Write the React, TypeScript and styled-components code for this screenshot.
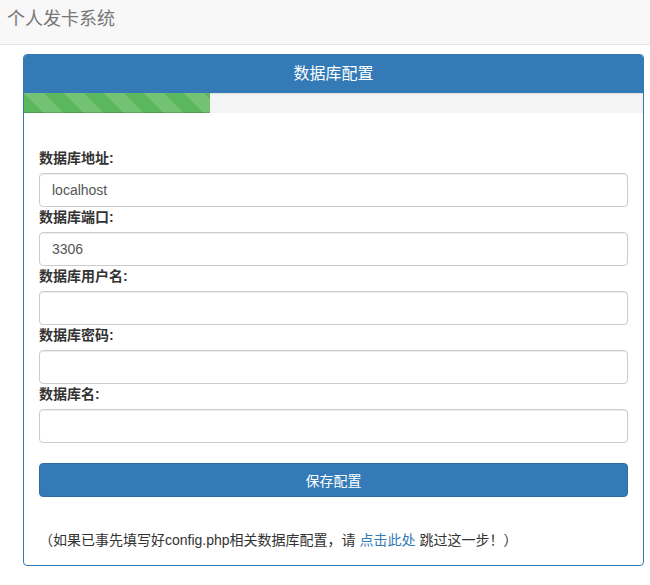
import React from "react";
import styled, { createGlobalStyle } from "styled-components";

const Global = createGlobalStyle`
  html, body { margin: 0; padding: 0; background: #fff; }
  body {
    font-family: "Liberation Sans", "Noto Sans CJK SC", Arial, sans-serif;
    font-size: 14px;
    line-height: 1.42857;
    color: #333;
  }
  * { box-sizing: border-box; }
`;

const Navbar = styled.div`
  height: 45px;
  background: #f8f8f8;
  border-bottom: 1px solid #e7e7e7;
  display: flex;
  align-items: center;
  padding: 0 0 6px 7px;
`;

const Brand = styled.span`
  font-size: 18px;
  color: #777;
  line-height: 20px;
`;

const Panel = styled.div`
  margin: 9px 6px 0 23px;
  border: 1px solid #337ab7;
  border-radius: 4px;
  background: #fff;
  overflow: hidden;
`;

const Heading = styled.div`
  background: #337ab7;
  color: #fff;
  font-size: 16px;
  height: 38px;
  display: flex;
  align-items: center;
  justify-content: center;
`;

const Progress = styled.div`
  height: 20px;
  background: #f5f5f5;
  box-shadow: inset 0 1px 2px rgba(0, 0, 0, 0.1);
`;

const Bar = styled.div`
  height: 100%;
  background-color: #5cb85c;
  background-image: linear-gradient(
    45deg,
    rgba(255, 255, 255, 0.15) 25%,
    transparent 25%,
    transparent 50%,
    rgba(255, 255, 255, 0.15) 50%,
    rgba(255, 255, 255, 0.15) 75%,
    transparent 75%,
    transparent
  );
  background-size: 40px 40px;
  box-shadow: inset 0 -1px 0 rgba(0, 0, 0, 0.15);
`;

const Body = styled.div`
  padding: 35px 15px 15px 15px;
  display: flex;
  flex-direction: column;
`;

const Label = styled.label`
  display: block;
  font-weight: bold;
  line-height: 20px;
  margin-bottom: 5px;
`;

const Input = styled.input`
  display: block;
  width: 100%;
  height: 34px;
  padding: 6px 12px;
  font-family: inherit;
  font-size: 14px;
  color: #555;
  background: #fff;
  border: 1px solid #ccc;
  border-radius: 4px;
  box-shadow: inset 0 1px 1px rgba(0, 0, 0, 0.075);
  outline: none;
`;

const Button = styled.button`
  margin-top: 20px;
  width: 100%;
  height: 34px;
  font-family: inherit;
  font-size: 14px;
  color: #fff;
  background: #337ab7;
  border: 1px solid #2e6da4;
  border-radius: 4px;
  cursor: pointer;
`;

const Note = styled.p`
  margin: 33px 0 0 0;
  line-height: 20px;
  color: #333;
`;

const Link = styled.a`
  color: #337ab7;
  text-decoration: none;
`;

const fields: { label: string; value: string }[] = [
  { label: "数据库地址:", value: "localhost" },
  { label: "数据库端口:", value: "3306" },
  { label: "数据库用户名:", value: "" },
  { label: "数据库密码:", value: "" },
  { label: "数据库名:", value: "" },
];

export default function App() {
  return (
    <>
      <Global />
      <Navbar>
        <Brand>个人发卡系统</Brand>
      </Navbar>
      <Panel>
        <Heading>数据库配置</Heading>
        <Progress>
          <Bar style={{ width: "30%" }} />
        </Progress>
        <Body>
          {fields.map((f) => (
            <div key={f.label}>
              <Label>{f.label}</Label>
              <Input defaultValue={f.value} />
            </div>
          ))}
          <Button>保存配置</Button>
          <Note>
            （如果已事先填写好config.php相关数据库配置，请 <Link href="#">点击此处</Link> 跳过这一步！）
          </Note>
        </Body>
      </Panel>
    </>
  );
}
